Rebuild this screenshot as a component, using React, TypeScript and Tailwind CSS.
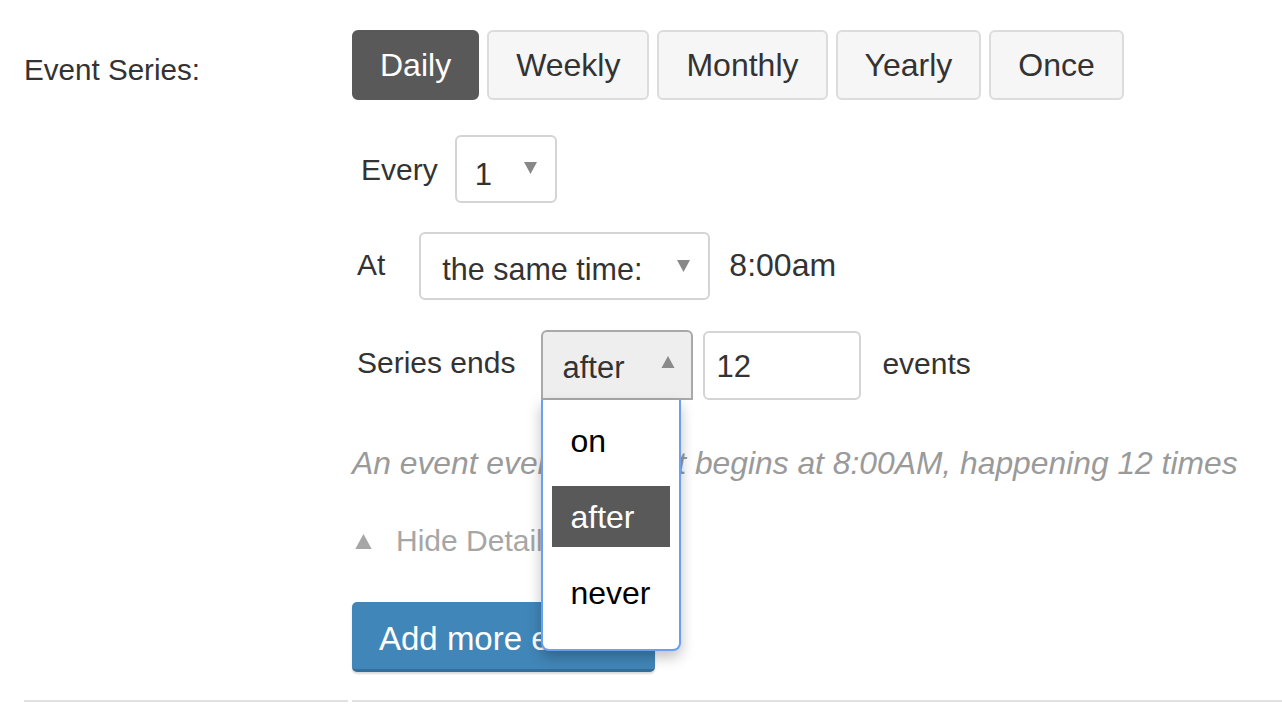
import React from "react";

const frequencies = ["Daily", "Weekly", "Monthly", "Yearly", "Once"];

function Caret({ up = false, className = "" }: { up?: boolean; className?: string }) {
  return (
    <svg viewBox="0 0 12 11" className={className} fill="currentColor">
      {up ? <path d="M6 0 L12 11 L0 11 Z" /> : <path d="M0 0 L12 0 L6 11 Z" />}
    </svg>
  );
}

export default function App() {
  return (
    <div
      className="w-[1282px] h-[712px] bg-white text-[#333] overflow-hidden"
      style={{ fontFamily: '"Liberation Sans", Arial, sans-serif' }}
    >
      <div className="flex">
        {/* Label column */}
        <div className="ml-[24px] w-[324px] border-b-2 border-[#e0e0e0] shrink-0">
          <div className="mt-[52px] text-[29.6px] leading-[36px]">Event Series:</div>
        </div>

        {/* Field column */}
        <div className="ml-[4px] flex-1 border-b-2 border-[#e0e0e0] pt-[30px] pb-[28px]">
          {/* frequency tabs */}
          <div className="flex gap-[8px]">
            {frequencies.map((f) => (
              <button
                key={f}
                className={
                  f === "Daily"
                    ? "h-[70px] px-[26px] rounded-[6px] border-2 border-[#595959] bg-[#595959] text-white text-[32px]"
                    : "h-[70px] px-[27px] rounded-[6px] border-2 border-[#dcdcdc] bg-[#f6f6f6] text-[#333] text-[32px]"
                }
              >
                {f}
              </button>
            ))}
          </div>

          {/* Every */}
          <div className="flex items-center mt-[35px]">
            <span className="ml-[9px] text-[30px]">Every</span>
            <div className="ml-[17px] w-[102px] h-[68px] rounded-[6px] border-2 border-[#d4d4d4] flex items-center justify-between pl-[18px] pr-[18px]">
              <span className="text-[31px] mt-[12px]">1</span>
              <Caret className="w-[13px] h-[12px] text-[#888] -mt-[2px]" />
            </div>
          </div>

          {/* At */}
          <div className="flex items-center mt-[29px]">
            <span className="ml-[5px] text-[30px] -mt-[4px]">At</span>
            <div className="ml-[34px] w-[291px] h-[68px] rounded-[6px] border-2 border-[#d4d4d4] flex items-center justify-between pl-[21px] pr-[18px]">
              <span className="text-[30.5px] mt-[8px]">the same time:</span>
              <Caret className="w-[13px] h-[12px] text-[#888]" />
            </div>
            <span className="ml-[19px] text-[32px] -mt-[2px]">8:00am</span>
          </div>

          {/* Series ends */}
          <div className="flex items-center mt-[30px]">
            <span className="ml-[5px] text-[30px] -mt-[6px]">Series ends</span>
            <div className="relative ml-[26px]">
              <div className="w-[152px] h-[70px] rounded-t-[6px] border-2 border-[#a9a9a9] bg-[#eeeeee] flex items-center justify-between pl-[19px] pr-[16px]">
                <span className="text-[31px] mt-[6px]">after</span>
                <Caret up className="w-[14px] h-[12px] text-[#8a8a8a] -mt-[6px]" />
              </div>
              {/* open dropdown */}
              <div className="absolute left-0 top-[70px] z-10 w-[140px] h-[251px] bg-white border-2 border-t-0 border-[#6b9ff0] rounded-b-[8px] shadow-[0_6px_14px_rgba(0,0,0,0.25)] pt-[10px] px-[9px] flex flex-col gap-[15px]">
                <div className="h-[61px] flex items-center pl-[18px] text-black text-[32px]">on</div>
                <div className="h-[61px] flex items-center pl-[18px] bg-[#595959] text-white text-[32px]">after</div>
                <div className="h-[61px] flex items-center pl-[18px] text-black text-[32px]">never</div>
              </div>
            </div>
            <div className="ml-[10px] w-[158px] h-[69px] rounded-[6px] border-2 border-[#d4d4d4] flex items-center pl-[11px]">
              <span className="text-[31px] mt-[4px]">12</span>
            </div>
            <span className="ml-[21px] text-[30px] -mt-[4px]">events</span>
          </div>

          {/* summary */}
          <div className="mt-[45px] text-[31.8px] leading-[36px] italic text-[#9a9a9a]">
            An event every day that begins at 8:00AM, happening 12 times
          </div>

          {/* hide details */}
          <div className="mt-[42px] flex items-center text-[#a6a6a6]">
            <Caret up className="ml-[2px] w-[19px] h-[15px] text-[#a6a6a6]" />
            <span className="ml-[23px] text-[30px] leading-[36px]">Hide Details</span>
          </div>

          {/* add more */}
          <button className="mt-[43px] h-[70px] pt-[6px] px-[27px] rounded-[5px] bg-[#4186b8] border-b-[3px] border-[#336f9b] text-white text-[33px] shadow-[0_2px_2px_rgba(0,0,0,0.15)]">
            Add more events
          </button>
        </div>
      </div>
    </div>
  );
}
